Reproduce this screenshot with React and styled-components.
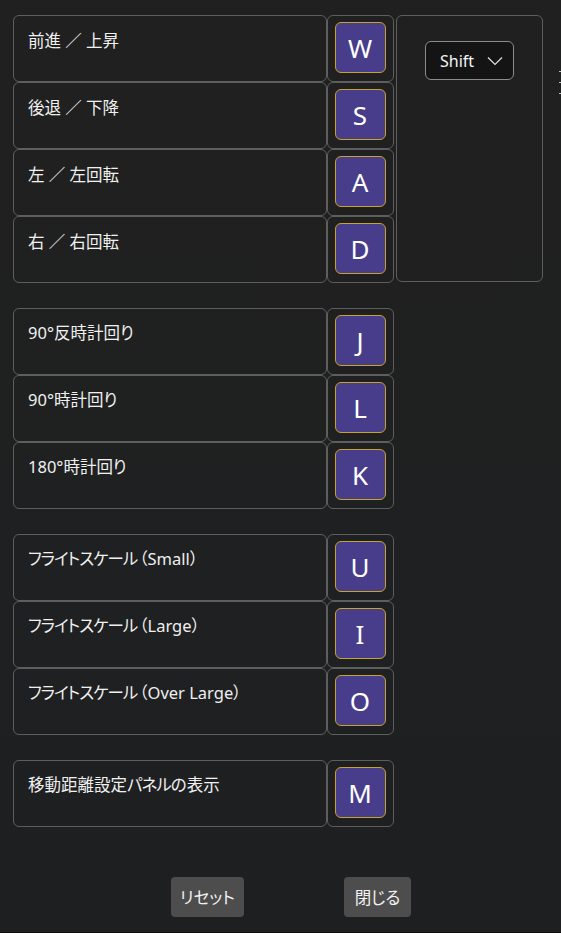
import React from "react";
import styled, { createGlobalStyle } from "styled-components";

const Global = createGlobalStyle`
  html, body { margin: 0; padding: 0; background: #202020; }
  body {
    font-family: "Noto Sans", "Noto Sans CJK JP", sans-serif;
    color: #f2f2f2;
  }
`;

const Page = styled.div`
  position: relative;
  width: 561px;
  height: 933px;
  box-sizing: border-box;
  padding: 15px 0 0 13px;
  background: linear-gradient(180deg, #202020 0%, #1f2021 70%, #1d1f21 100%);
  display: flex;
  flex-direction: column;
  gap: 25px;
  overflow: hidden;
  border-bottom: 1px solid #0c0c0c;
`;

const Group = styled.div`
  display: grid;
  grid-template-columns: 314px 67px ${(p) => (p.$side ? "149px" : "")};
  grid-auto-rows: 67px;
  column-gap: 0;
`;

const Cell = styled.div`
  box-sizing: border-box;
  border: 1px solid #5e5e5e;
  border-radius: 6px;
`;

const LabelCell = styled(Cell)`
  padding: 13px 14px;
  font-size: 16.5px;
  line-height: 22px;
  font-family: "Noto Sans", "Noto Sans CJK JP", sans-serif;
  font-feature-settings: "palt";
  color: #f0f0f0;
  white-space: nowrap;
`;

const Slash = styled.span`
  font-feature-settings: normal;
  font-family: "Noto Sans CJK JP", sans-serif;
`;

const Kana = styled.span`
  letter-spacing: -1px;
`;

const OpenParen = styled.span`
  margin-left: 2px;
`;

const KeyCell = styled(Cell)`
  display: flex;
  align-items: flex-start;
  justify-content: center;
  padding-top: 6px;
  padding-right: 1px;
`;

const KeyCap = styled.div`
  box-sizing: border-box;
  width: 51px;
  height: 51px;
  border: 1.5px solid #c9a227;
  border-radius: 6px;
  background: #483d8b;
  display: flex;
  align-items: center;
  justify-content: center;
  font-family: "Noto Sans", sans-serif;
  font-size: 26px;
  color: #ffffff;
  line-height: 1;
`;

const SidePanel = styled(Cell)`
  grid-column: 3;
  grid-row: 1 / span 4;
  margin-left: 2px;
  margin-bottom: 1px;
  display: flex;
  justify-content: center;
  padding-top: 25px;
`;

const Dropdown = styled.div`
  box-sizing: border-box;
  width: 89px;
  height: 39px;
  border: 1px solid #8c8c8c;
  border-radius: 6px;
  background: #141414;
  display: flex;
  align-items: center;
  padding-left: 14px;
  gap: 13px;
  font-size: 16px;
  color: #f5f5f5;
`;

const Footer = styled.div`
  display: flex;
  gap: 100px;
  padding-left: 158px;
  margin-top: 25px;
`;

const Button = styled.div`
  width: ${(p) => p.$w}px;
  height: 40px;
  display: flex;
  align-items: center;
  justify-content: center;
  border-radius: 4px;
  background: #4d4d4e;
  font-size: 16.5px;
  color: #f2f2f2;
  font-family: "Noto Sans CJK JP", sans-serif;
  font-feature-settings: "palt";
`;

const ScrollTicks = styled.div`
  position: absolute;
  right: 0;
  top: 71px;
  width: 2px;
  display: flex;
  flex-direction: column;
  gap: 10px;
  & > span {
    display: block;
    height: 1px;
    background: #bfbfbf;
  }
`;

const Chevron = () => (
  <svg width="16" height="10" viewBox="0 0 16 10" fill="none">
    <path d="M1 1.5 L8 8.5 L15 1.5" stroke="#e0e0e0" strokeWidth="1.2" />
  </svg>
);

const renderLabel = (text) =>
  text.split(/(／|（|[\u30A0-\u30FF]+)/).filter(Boolean).map((part, i) => {
    if (part === "／") return <Slash key={i}>{part}</Slash>;
    if (part === "（") return <OpenParen key={i}>{part}</OpenParen>;
    if (/^[\u30A0-\u30FF]+$/.test(part)) return <Kana key={i}>{part}</Kana>;
    return part;
  });

const Row = ({ label, k }) => (
  <>
    <LabelCell>{renderLabel(label)}</LabelCell>
    <KeyCell>
      <KeyCap>{k}</KeyCap>
    </KeyCell>
  </>
);

const groups = [
  [
    ["前進 ／ 上昇", "W"],
    ["後退 ／ 下降", "S"],
    ["左 ／ 左回転", "A"],
    ["右 ／ 右回転", "D"],
  ],
  [
    ["90°反時計回り", "J"],
    ["90°時計回り", "L"],
    ["180°時計回り", "K"],
  ],
  [
    ["フライトスケール（Small）", "U"],
    ["フライトスケール（Large）", "I"],
    ["フライトスケール（Over Large）", "O"],
  ],
  [["移動距離設定パネルの表示", "M"]],
];

export default function App() {
  return (
    <>
      <Global />
      <Page>
        {groups.map((g, gi) => (
          <Group key={gi} $side={gi === 0}>
            {g.map(([label, k], i) =>
              gi === 0 ? (
                <React.Fragment key={k}>
                  <LabelCell style={{ gridColumn: 1, gridRow: i + 1 }}>
                    {renderLabel(label)}
                  </LabelCell>
                  <KeyCell style={{ gridColumn: 2, gridRow: i + 1 }}>
                    <KeyCap>{k}</KeyCap>
                  </KeyCell>
                </React.Fragment>
              ) : (
                <Row key={k} label={label} k={k} />
              )
            )}
            {gi === 0 && (
              <SidePanel>
                <Dropdown>
                  Shift
                  <Chevron />
                </Dropdown>
              </SidePanel>
            )}
          </Group>
        ))}
        <Footer>
          <Button $w={73}>リセット</Button>
          <Button $w={67}>閉じる</Button>
        </Footer>
        <ScrollTicks>
          <span />
          <span />
          <span />
        </ScrollTicks>
      </Page>
    </>
  );
}
